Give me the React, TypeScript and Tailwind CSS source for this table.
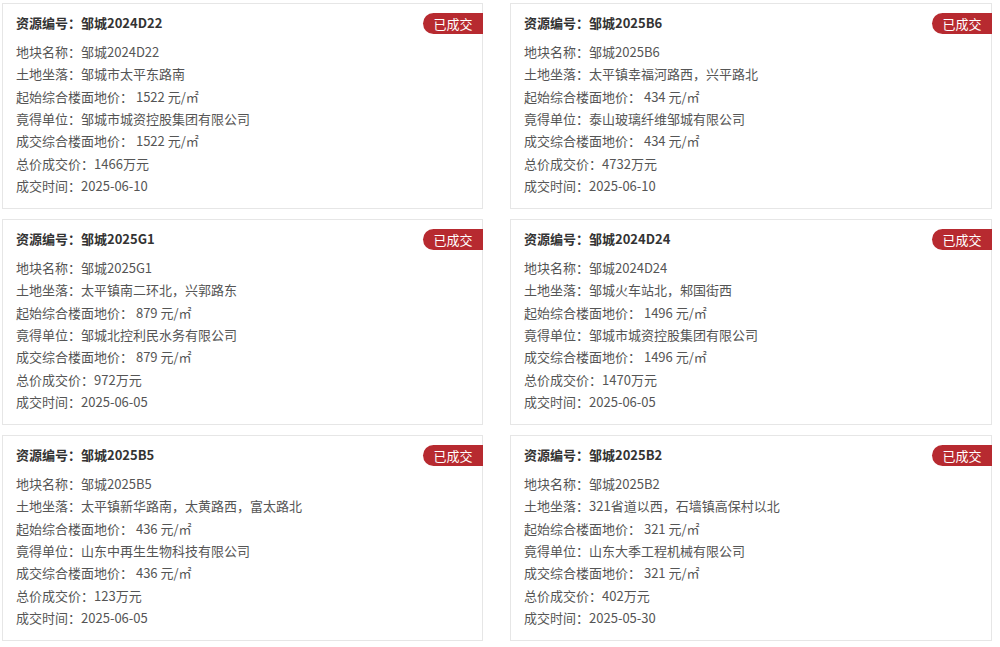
import React from 'react';

type Land = {
  code: string;
  name: string;
  location: string;
  startPrice: string;
  winner: string;
  dealPrice: string;
  total: string;
  date: string;
};

const lands: Land[] = [
  { code: '邹城2024D22', name: '邹城2024D22', location: '邹城市太平东路南', startPrice: '1522', winner: '邹城市城资控股集团有限公司', dealPrice: '1522', total: '1466', date: '2025-06-10' },
  { code: '邹城2025B6', name: '邹城2025B6', location: '太平镇幸福河路西，兴平路北', startPrice: '434', winner: '泰山玻璃纤维邹城有限公司', dealPrice: '434', total: '4732', date: '2025-06-10' },
  { code: '邹城2025G1', name: '邹城2025G1', location: '太平镇南二环北，兴郭路东', startPrice: '879', winner: '邹城北控利民水务有限公司', dealPrice: '879', total: '972', date: '2025-06-05' },
  { code: '邹城2024D24', name: '邹城2024D24', location: '邹城火车站北，邾国街西', startPrice: '1496', winner: '邹城市城资控股集团有限公司', dealPrice: '1496', total: '1470', date: '2025-06-05' },
  { code: '邹城2025B5', name: '邹城2025B5', location: '太平镇新华路南，太黄路西，富太路北', startPrice: '436', winner: '山东中再生生物科技有限公司', dealPrice: '436', total: '123', date: '2025-06-05' },
  { code: '邹城2025B2', name: '邹城2025B2', location: '321省道以西，石墙镇高保村以北', startPrice: '321', winner: '山东大季工程机械有限公司', dealPrice: '321', total: '402', date: '2025-05-30' },
];

function LandCard({ land }: { land: Land }) {
  return (
    <div className="relative h-[206px] border border-[#e6e6e6] bg-white pl-[13px] pt-[8px]">
      {/* 状态标签 */}
      <span className="absolute right-[-1px] top-[9px] flex h-[21px] w-[60px] items-center justify-center rounded-l-full bg-[#b72a30] text-[13px] text-white">
        已成交
      </span>
      <h3 className="text-[13px] font-bold leading-[22px] text-[#333]">资源编号：{land.code}</h3>
      <div className="mt-[7px] text-[13px] leading-[22.33px] text-[#555]">
        <p>地块名称：{land.name}</p>
        <p>土地坐落：{land.location}</p>
        <p>起始综合楼面地价： {land.startPrice} 元/㎡</p>
        <p>竟得单位：{land.winner}</p>
        <p>成交综合楼面地价： {land.dealPrice} 元/㎡</p>
        <p>总价成交价：{land.total}万元</p>
        <p>成交时间：{land.date}</p>
      </div>
    </div>
  );
}

export default function App() {
  return (
    <div
      className="min-h-screen bg-white pl-[2px] pt-[3px]"
      style={{ fontFamily: '"Noto Sans CJK SC", "Noto Sans", sans-serif' }}
    >
      <div className="grid grid-cols-[481px_482px] gap-x-[27px] gap-y-[10px]">
        {lands.map((land) => (
          <LandCard key={land.code} land={land} />
        ))}
      </div>
    </div>
  );
}
